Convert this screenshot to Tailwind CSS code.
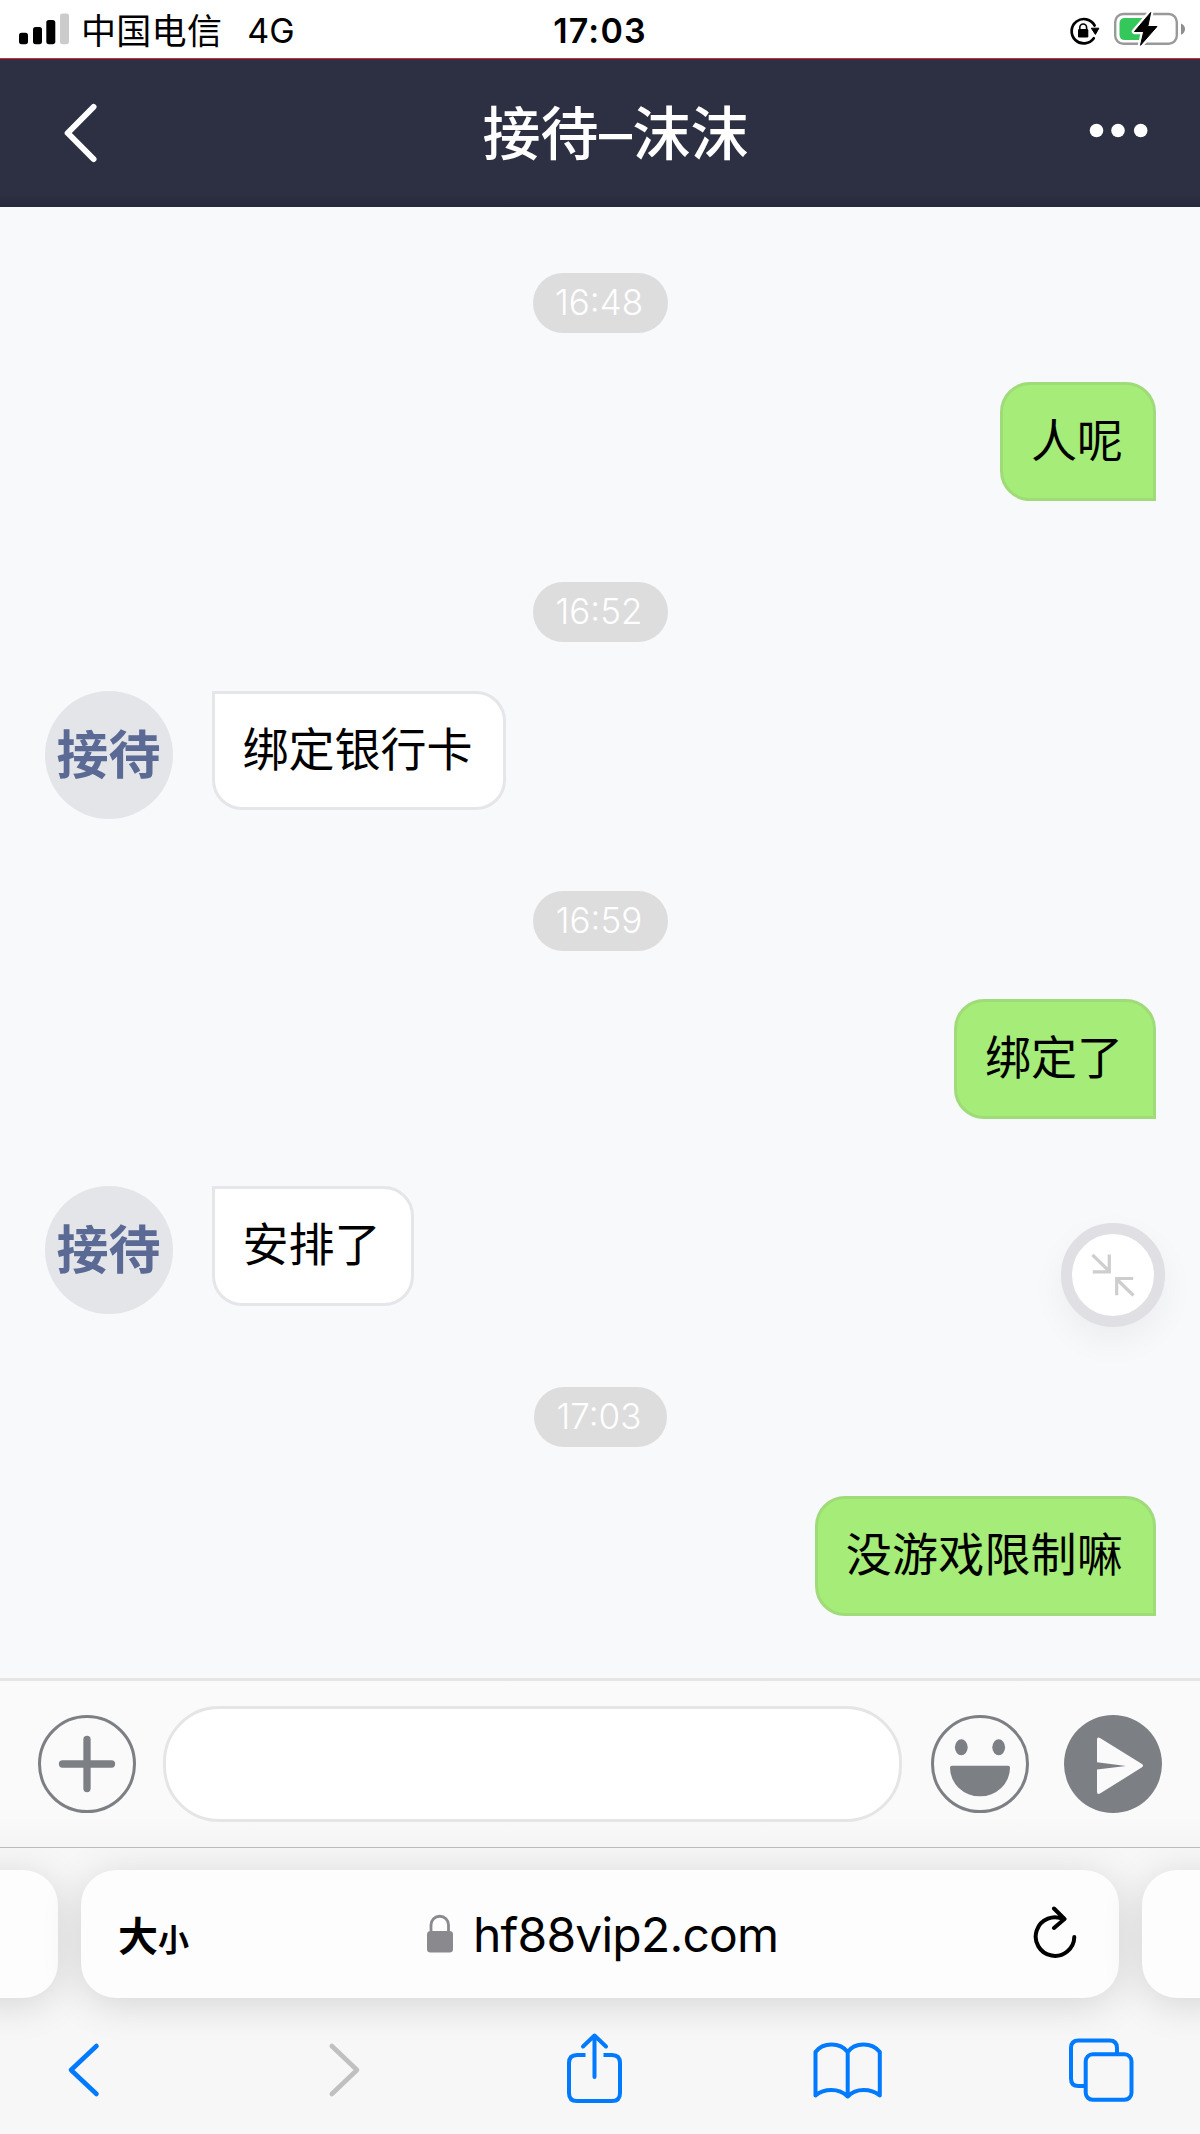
<!DOCTYPE html>
<html lang="zh-CN">
<head>
<meta charset="utf-8">
<title>接待–沫沫</title>
<script src="https://cdn.jsdelivr.net/npm/@tailwindcss/browser@4"></script>
</head>
<body class="w-[1200px] h-[2134px] overflow-hidden flex flex-col bg-[#f8f9fb] text-black font-['Inter','Noto_Sans_CJK_SC',sans-serif]">

<!-- status bar -->
<div class="h-[59px] shrink-0 bg-white border-b border-[#e0262c] grid grid-cols-3 items-start">
  <div class="flex pl-[19px]">
    <svg class="w-[50px] h-[58px]" viewBox="0 0 50 58"><rect x="0" y="32.7" width="9" height="11.5" rx="2.6"/><rect x="14" y="27" width="9" height="17.2" rx="2.6"/><rect x="27.3" y="20" width="9" height="24.2" rx="2.6"/><rect x="41" y="13.5" width="9" height="30.7" rx="2.6" fill="#cbcbcb"/></svg>
    <span class="ml-[12px] leading-[57px] text-[35px] tracking-[0.3px] font-['Noto_Sans_CJK_SC',sans-serif]">中国电信</span>
    <span class="ml-[25px] leading-[61px] text-[34px]">4G</span>
  </div>
  <div class="text-center leading-[61px] text-[34px] font-semibold tracking-[1.2px]">17:03</div>
  <div class="flex justify-end pr-[14px]">
    <svg class="w-[118px] h-[58px]" viewBox="1068 0 118 58" fill="none">
      <path d="M1093.8 38.3A12.2 12.2 0 1 1 1094.6 25.5" stroke="#000" stroke-width="2.7" stroke-linecap="round"/>
      <path d="M1091.3 28.2h7.6l-3.5 6.2z" fill="#000" stroke="#000" stroke-width="1" stroke-linejoin="round"/>
      <rect x="1078" y="29" width="10.3" height="8.6" rx="1.3" fill="#000"/>
      <path d="M1079.8 29.5v-2.1a3.4 3.4 0 0 1 6.8 0v2.1" stroke="#000" stroke-width="1.6"/>
      <rect x="1115.2" y="14" width="61.6" height="29.8" rx="8" stroke="#999" stroke-width="2.4"/>
      <path d="M1181 23.5q4 1.5 4 5.5t-4 5.7z" fill="#8e8e8e"/>
      <path d="M1125 18h17v22h-17q-5.5 0-5.5-5.5v-11q0-5.500 5.500-5.500z" fill="#34c759"/>
      <path d="M1150.700 12.500L1134.500 31.500h9.200L1140.500 45.300L1157 26.500h-9.200z" fill="#000" stroke="#fff" stroke-width="5.500" stroke-linejoin="round"/>
      <path d="M1150.700 12.500L1134.500 31.500h9.200L1140.500 45.300L1157 26.500h-9.200z" fill="#000" stroke="#000" stroke-width="1" stroke-linejoin="round"/>
    </svg>
  </div>
</div>

<!-- chat header -->
<header class="h-[148px] shrink-0 bg-linear-to-b from-[#2d2f42] from-92% to-[#27283b] flex items-center justify-between pl-[60px] pr-[48px] text-white">
  <svg class="w-[42px] h-[70px]" viewBox="60.500 98 42 70" fill="none" stroke="#fff" stroke-width="6" stroke-linecap="round" stroke-linejoin="round"><path d="M94 107L68.200 133L94 159"/></svg>
  <h1 class="ml-[41px] mb-[6px] text-[58px] leading-[80px] font-medium font-['Noto_Sans_CJK_SC',sans-serif] flex items-center">接待<span class="w-[34px] flex justify-center pt-[6px]"><span class="text-[66px] font-normal font-['Inter']">–</span></span>沫沫</h1>
  <svg class="w-[64px] h-[20px]" viewBox="1088 122.500 64 20" fill="#fff"><circle cx="1096.500" cy="130" r="6.800"/><circle cx="1118" cy="130" r="6.800"/><circle cx="1140.700" cy="130" r="6.800"/></svg>
</header>

<!-- conversation -->
<main class="h-[1471px] shrink-0 flex flex-col pl-[44px] pr-[44px] pt-[66px] text-[46px] leading-[64px] font-['Noto_Sans_CJK_SC',sans-serif]">
  <time class="self-center w-[135px] h-[60px] rounded-full bg-[#ddd] text-white font-light text-[35px] leading-[59px] text-center pr-[2px] font-['Inter']">16:48</time>
  <div class="self-end mt-[49px] h-[119px] border-[3px] border-[#a0db79] rounded-[30px] rounded-br-none bg-[#a6ec79] pl-[28px] pr-[30px] pt-[20px]">人呢</div>

  <time class="self-center mt-[81px] w-[135px] h-[60px] rounded-full bg-[#ddd] text-white font-light text-[35px] leading-[59px] text-center pr-[2px] font-['Inter']">16:52</time>
  <div class="flex mt-[49px] items-start">
    <div class="size-[128px] ml-[0.500px] rounded-full bg-[#e4e5e9] text-[#5a6a94] text-[52px] leading-[122px] font-bold text-center">接待</div>
    <div class="ml-[39px] h-[119px] border-[3px] border-[#e5e6ea] rounded-[30px] rounded-tl-none bg-white pl-[28px] pr-[30px] pt-[20px]">绑定银行卡</div>
  </div>

  <time class="self-center mt-[72px] w-[135px] h-[60px] rounded-full bg-[#ddd] text-white font-light text-[35px] leading-[59px] text-center pr-[2px] font-['Inter']">16:59</time>
  <div class="self-end mt-[48px] h-[120px] border-[3px] border-[#a0db79] rounded-[30px] rounded-br-none bg-[#a6ec79] pl-[28px] pr-[30px] pt-[20px]">绑定了</div>
  <div class="flex mt-[67px] items-start">
    <div class="size-[128px] ml-[0.500px] rounded-full bg-[#e4e5e9] text-[#5a6a94] text-[52px] leading-[122px] font-bold text-center">接待</div>
    <div class="ml-[39px] h-[120px] border-[3px] border-[#e5e6ea] rounded-[30px] rounded-tl-none bg-white pl-[28px] pr-[30px] pt-[20px]">安排了</div>
  </div>

  <time class="self-center mt-[73px] w-[133px] h-[60px] rounded-full bg-[#ddd] text-white font-light text-[35px] leading-[59px] text-center pr-[2px] font-['Inter']">17:03</time>
  <div class="self-end mt-[49px] h-[120px] border-[3px] border-[#a0db79] rounded-[30px] rounded-br-none bg-[#a6ec79] pl-[28px] pr-[30px] pt-[20px] tracking-[0.200px]">没游戏限制嘛</div>
</main>

<!-- floating collapse button -->
<button class="absolute left-[1061px] top-[1223px] size-[104px] rounded-full border-[11px] border-[#dfdfe4] bg-white bg-clip-padding shadow-[0_14px_34px_rgba(0,0,0,0.05)] flex items-center justify-center">
  <svg class="w-[46px] h-[46px]" viewBox="1090 1252 46 46" fill="none" stroke="#cecece" stroke-width="3.200"><path d="M1092.500 1254.800L1110 1272M1109.300 1254.500v17.300h-16.500M1133.500 1295.500L1116 1278.500M1116.700 1295.300v-16.800h16.500"/></svg>
</button>

<!-- message composer -->
<div class="h-[169px] shrink-0 border-t-[3px] border-[#e5e5e5] bg-linear-to-b from-[#fafafa] from-80% to-[#f5f5f5] flex items-center pl-[38px] pr-[38px] text-[#7c7f84]">
  <svg class="w-[98px] h-[98px] mb-px" viewBox="0 0 98 98" fill="none" stroke="currentColor"><circle cx="49" cy="49" r="47.500" stroke-width="3"/><path d="M49 24.500v49M24.500 49h49" stroke-width="7.300" stroke-linecap="round"/></svg>
  <div class="ml-[27px] w-[739px] h-[116px] rounded-[56px] border-[3px] border-[#e5e5e5] bg-white"></div>
  <svg class="ml-[29px] w-[98px] h-[98px] mb-px" viewBox="0 0 98 98" fill="currentColor"><circle cx="49" cy="49" r="47.500" fill="none" stroke="currentColor" stroke-width="3"/><ellipse cx="30.300" cy="32.300" rx="6.400" ry="8"/><ellipse cx="67.700" cy="32.300" rx="6.400" ry="8"/><path d="M21 50.800h56q2 0 2 2A30 28.500 0 0 1 19 52.800q0-2 2-2z"/></svg>
  <svg class="ml-[35px] w-[98px] h-[98px] mb-px" viewBox="0 0 98 98"><circle cx="49" cy="49" r="49" fill="currentColor"/><path d="M33 24.500q0-3 3-1.600L78 49q2 1.700 0 3.300L36 78.600q-3 1.200-3-1.600V54.500L62 51L33 47.200z" fill="#fafafa"/></svg>
</div>

<!-- browser address bar -->
<footer class="h-[287px] shrink-0 border-t border-[#bcbcbe] bg-[#f7f7f7] overflow-hidden flex flex-col">
  <div class="flex mt-[22px] h-[128px] gap-[23px] -mx-[42px]">
    <div class="w-[100px] shrink-0 rounded-[35px] bg-[#fdfdfd] shadow-[0_6px_40px_rgba(0,0,0,0.14)]"></div>
    <div class="w-[1038px] shrink-0 rounded-[35px] bg-[#fdfdfd] shadow-[0_6px_40px_rgba(0,0,0,0.14)] flex items-center pl-[37px] pr-[42px]">
      <div class="flex items-baseline font-bold leading-[60px] pt-[3px] font-['Noto_Sans_CJK_SC',sans-serif]"><span class="text-[40px]">大</span><span class="text-[31px]">小</span></div>
      <svg class="ml-[237px] w-[28px] h-[40px]" viewBox="0 0 28 40"><rect x="1" y="17" width="26" height="21.500" rx="3.500" fill="#8a8a8e"/><path d="M5 18v-7a8.700 8.700 0 0 1 17.500 0v7" fill="none" stroke="#8a8a8e" stroke-width="2.800"/></svg>
      <span class="ml-[19px] pt-[2px] text-[48px] leading-[60px] tracking-[-0.800px]">hf88vip2.com</span>
      <svg class="ml-auto mb-[4px] w-[44px] h-[56px]" viewBox="1033 1904 44 56" fill="none" stroke="#000" stroke-width="4" stroke-linecap="round" stroke-linejoin="round"><path d="M1074.300 1937A19.300 19.300 0 1 1 1064 1919.500M1054 1908.500L1064.500 1919L1054 1928"/></svg>
    </div>
    <div class="w-[100px] shrink-0 rounded-[35px] bg-[#fdfdfd] shadow-[0_6px_40px_rgba(0,0,0,0.14)]"></div>
  </div>
  <!-- browser toolbar -->
  <nav class="flex mt-[30px] pl-[65px] h-[80px] text-[#007aff]">
    <svg class="w-[36px] h-[80px]" viewBox="65 2028 36 80" fill="none" stroke="currentColor" stroke-width="4.600" stroke-linecap="round" stroke-linejoin="round"><path d="M96.500 2046L71 2070L96.500 2094"/></svg>
    <svg class="w-[36px] h-[80px] ml-[225px]" viewBox="326 2028 36 80" fill="none" stroke="#c0c0c0" stroke-width="4.600" stroke-linecap="round" stroke-linejoin="round"><path d="M331.800 2046L357 2070L331.800 2094"/></svg>
    <svg class="w-[60px] h-[80px] ml-[202px]" viewBox="564 2028 60 80" fill="none" stroke="currentColor" stroke-width="4"><path d="M585.500 2055h-8.500q-8 0-8 8v30q0 8 8 8h35q8 0 8-8v-30q0-8-8-8h-8.500"/><path d="M594.500 2077v-41M583 2046.500L594.500 2035.500L606 2046.500" stroke-linecap="round" stroke-linejoin="round"/></svg>
    <svg class="w-[74px] h-[80px] ml-[186px]" viewBox="810 2028 74 80" fill="none" stroke="currentColor" stroke-width="4" stroke-linejoin="round"><path d="M815.500 2095.500V2052Q821 2044.500 831.500 2044.500T847.700 2052Q853 2044.500 863.500 2044.500T879.800 2052V2095.500Q873 2090 863.500 2090T847.700 2096.500Q841 2090 831.500 2090T815.500 2095.500zM847.700 2052v44"/></svg>
    <svg class="w-[70px] h-[80px] ml-[182px]" viewBox="1066 2028 70 80" fill="none" stroke="currentColor" stroke-width="4"><path d="M1084.500 2086h-6q-7.500 0-7.500-7.500v-30.500q0-7.500 7.500-7.500h31q7.500 0 7.500 7.500v6"/><rect x="1085.700" y="2054.300" width="45.800" height="45.500" rx="7"/></svg>
  </nav>
</footer>
</body>
</html>
